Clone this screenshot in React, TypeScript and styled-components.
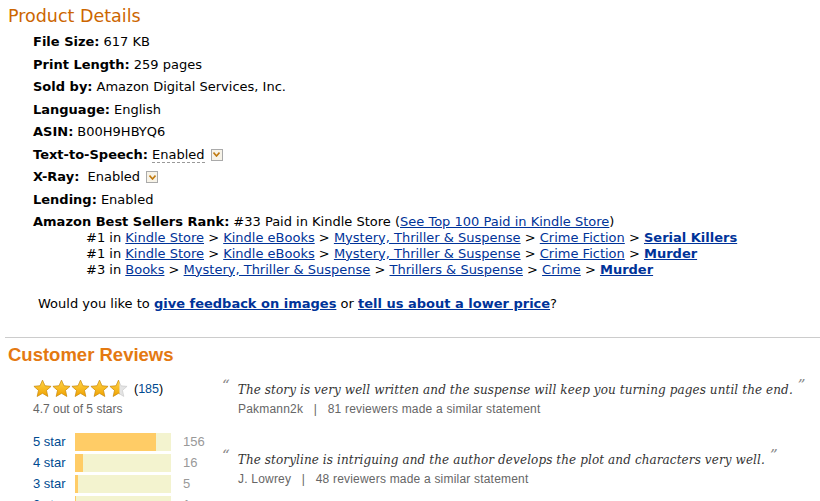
import React from "react";
import styled, { createGlobalStyle } from "styled-components";

const GlobalStyle = createGlobalStyle`
  body {
    margin: 0;
    background: #fff;
    font-family: "DejaVu Sans", Verdana, sans-serif;
    color: #000;
  }
`;

const Page = styled.div`
  padding: 4px 0 0 8px;
  width: 812px;
`;

const DetailsTitle = styled.h2`
  margin: 0 0 3px;
  font-family: "DejaVu Sans", Verdana, sans-serif;
  font-weight: normal;
  font-size: 17.5px;
  color: #cc6600;
  line-height: 24px;
`;

const DetailsList = styled.ul`
  list-style: none;
  margin: 0;
  padding: 0 0 0 25px;
`;

const DetailItem = styled.li`
  font-size: 13px;
  line-height: 22.5px;
  display: flex;
  align-items: center;
  white-space: nowrap;
`;

const Label = styled.b`
  margin-right: 4px;
`;

const Dotted = styled.span`
  border-bottom: 1px dashed #999;
  line-height: 15px;
`;

const DropBox = styled.span`
  display: inline-flex;
  align-items: center;
  justify-content: center;
  width: 12px;
  height: 12px;
  border: 1px solid #aaa;
  background: #f7f3e8;
  margin-left: 6px;
  box-sizing: border-box;
`;

const RankBlock = styled.li`
  font-size: 13px;
  line-height: 22.5px;
  white-space: nowrap;
`;

const SubRanks = styled.ul`
  list-style: none;
  margin: -4px 0 0;
  padding: 0 0 0 53px;
`;

const SubRank = styled.li`
  line-height: 16px;
`;

const Link = styled.a<{ $bold?: boolean }>`
  color: #003399;
  text-decoration: underline;
  font-weight: ${(p) => (p.$bold ? "bold" : "normal")};
`;

const Feedback = styled.p`
  margin: 18px 0 0 30px;
  font-size: 13px;
  line-height: 16px;
`;

const Rule = styled.hr`
  margin: 25px 0 0 -3px;
  border: none;
  border-top: 1px solid #cccccc;
  height: 0;
`;

const ReviewsTitle = styled.h2`
  margin: 5px 0 0;
  font-family: "Liberation Sans", Arial, sans-serif;
  font-size: 18.5px;
  font-weight: bold;
  color: #e47911;
  line-height: 23px;
`;

const ReviewsBody = styled.div`
  display: flex;
  padding: 13px 0 0 25px;
`;

const Summary = styled.div`
  width: 189px;
  flex-shrink: 0;
  font-family: "Liberation Sans", Arial, sans-serif;
`;

const StarsRow = styled.div`
  display: flex;
  align-items: center;
  height: 20px;
`;

const Count = styled.a`
  margin-left: 6px;
  font-size: 12.5px;
  color: #004b91;
  text-decoration: none;
  &::before { content: "("; color: #000; }
  &::after { content: ")"; color: #000; }
`;

const AverageText = styled.div`
  font-size: 12px;
  color: #666;
  line-height: 16px;
  margin-top: 2px;
`;

const Histogram = styled.div`
  margin-top: 16px;
  display: grid;
  grid-template-columns: 42px 96px 40px;
  row-gap: 3px;
  align-items: center;
`;

const StarLink = styled.a`
  font-size: 13px;
  color: #004b91;
  text-decoration: none;
  line-height: 18px;
`;

const Bar = styled.div`
  height: 18px;
  background: #f3f3cf;
`;

const BarFill = styled.div`
  height: 100%;
  background: #ffcc66;
`;

const BarCount = styled.span`
  font-size: 13px;
  color: #999;
  padding-left: 12px;
`;

const Quotes = styled.div`
  display: flex;
  flex-direction: column;
  gap: 26px;
  margin-top: -3px;
`;

const QuoteText = styled.div`
  font-family: "DejaVu Serif", Georgia, serif;
  font-style: italic;
  font-size: 12px;
  letter-spacing: 0.1px;
  color: #333;
  line-height: 18px;
  white-space: nowrap;
  &::before,
  &::after {
    color: #888;
    font-size: 15px;
    vertical-align: 4px;
  }
  &::before {
    content: "\u201C";
    margin-right: 8px;
  }
  &::after {
    content: "\u201D";
    margin-left: 5px;
  }
`;

const Reviewer = styled.div`
  font-family: "Liberation Sans", Arial, sans-serif;
  font-size: 12px;
  letter-spacing: 0.2px;
  color: #666;
  padding-left: 16px;
  line-height: 21px;
  white-space: pre;
`;

const Chevron = () => (
  <svg width="7" height="5" viewBox="0 0 7 5">
    <path d="M0.5 0.5 L3.5 4 L6.5 0.5" fill="none" stroke="#c07a10" strokeWidth="1.6" />
  </svg>
);

const StarIcon: React.FC<{ fill: number; id: string }> = ({ fill, id }) => (
  <svg width="19" height="19" viewBox="0 0 24 24">
    <defs>
      <linearGradient id={`g${id}`} x1="0" y1="0" x2="0" y2="1">
        <stop offset="0" stopColor="#ffd54a" />
        <stop offset="1" stopColor="#f0a200" />
      </linearGradient>
      <clipPath id={`c${id}`}>
        <rect x="0" y="0" width={24 * fill} height="24" />
      </clipPath>
    </defs>
    <path
      d="M12 1.5 L15.1 8.6 L22.8 9.3 L17 14.4 L18.7 22 L12 18 L5.3 22 L7 14.4 L1.2 9.3 L8.9 8.6 Z"
      fill="#e4e4e4"
      stroke="#c8c8c8"
      strokeWidth="0.8"
    />
    <path
      d="M12 1.5 L15.1 8.6 L22.8 9.3 L17 14.4 L18.7 22 L12 18 L5.3 22 L7 14.4 L1.2 9.3 L8.9 8.6 Z"
      fill={`url(#g${id})`}
      stroke="#d08a00"
      strokeWidth="0.8"
      clipPath={`url(#c${id})`}
    />
  </svg>
);

const ranks = [
  { pos: "#1", path: ["Kindle Store", "Kindle eBooks", "Mystery, Thriller & Suspense", "Crime Fiction"], last: "Serial Killers" },
  { pos: "#1", path: ["Kindle Store", "Kindle eBooks", "Mystery, Thriller & Suspense", "Crime Fiction"], last: "Murder" },
  { pos: "#3", path: ["Books", "Mystery, Thriller & Suspense", "Thrillers & Suspense", "Crime"], last: "Murder" },
];

const histogram = [
  { label: "5 star", count: 156 },
  { label: "4 star", count: 16 },
  { label: "3 star", count: 5 },
  { label: "2 star", count: 1 },
];

const App: React.FC = () => {
  const total = 185;
  return (
    <>
      <GlobalStyle />
      <Page>
        <DetailsTitle>Product Details</DetailsTitle>
        <DetailsList>
          <DetailItem><Label>File Size:</Label> 617 KB</DetailItem>
          <DetailItem><Label>Print Length:</Label> 259 pages</DetailItem>
          <DetailItem><Label>Sold by:</Label> Amazon Digital Services, Inc.</DetailItem>
          <DetailItem><Label>Language:</Label> English</DetailItem>
          <DetailItem><Label>ASIN:</Label> B00H9HBYQ6</DetailItem>
          <DetailItem>
            <Label>Text-to-Speech:</Label>
            <Dotted>Enabled</Dotted>
            <DropBox><Chevron /></DropBox>
          </DetailItem>
          <DetailItem>
            <Label>X-Ray:</Label>&nbsp;Enabled
            <DropBox><Chevron /></DropBox>
          </DetailItem>
          <DetailItem><Label>Lending:</Label> Enabled</DetailItem>
          <RankBlock>
            <Label>Amazon Best Sellers Rank:</Label>#33 Paid in Kindle Store (
            <Link href="#">See Top 100 Paid in Kindle Store</Link>)
            <SubRanks>
              {ranks.map((r, i) => (
                <SubRank key={i}>
                  {r.pos} in{" "}
                  {r.path.map((p, j) => (
                    <React.Fragment key={j}>
                      <Link href="#">{p}</Link> &gt;{" "}
                    </React.Fragment>
                  ))}
                  <Link href="#" $bold>{r.last}</Link>
                </SubRank>
              ))}
            </SubRanks>
          </RankBlock>
        </DetailsList>
        <Feedback>
          Would you like to <Link href="#" $bold>give feedback on images</Link> or{" "}
          <Link href="#" $bold>tell us about a lower price</Link>?
        </Feedback>
        <Rule />
        <ReviewsTitle>Customer Reviews</ReviewsTitle>
        <ReviewsBody>
          <Summary>
            <StarsRow>
              {[1, 1, 1, 1, 0.55].map((f, i) => (
                <StarIcon key={i} fill={f} id={String(i)} />
              ))}
              <Count href="#">185</Count>
            </StarsRow>
            <AverageText>4.7 out of 5 stars</AverageText>
            <Histogram>
              {histogram.map((h) => (
                <React.Fragment key={h.label}>
                  <StarLink href="#">{h.label}</StarLink>
                  <Bar>
                    <BarFill style={{ width: `${(h.count / total) * 100}%` }} />
                  </Bar>
                  <BarCount>{h.count}</BarCount>
                </React.Fragment>
              ))}
            </Histogram>
          </Summary>
          <Quotes>
            <div>
              <QuoteText>The story is very well written and the suspense will keep you turning pages until the end.</QuoteText>
              <Reviewer>{"Pakmann2k   |   81 reviewers made a similar statement"}</Reviewer>
            </div>
            <div>
              <QuoteText>The storyline is intriguing and the author develops the plot and characters very well.</QuoteText>
              <Reviewer>{"J. Lowrey   |   48 reviewers made a similar statement"}</Reviewer>
            </div>
          </Quotes>
        </ReviewsBody>
      </Page>
    </>
  );
};

export default App;
